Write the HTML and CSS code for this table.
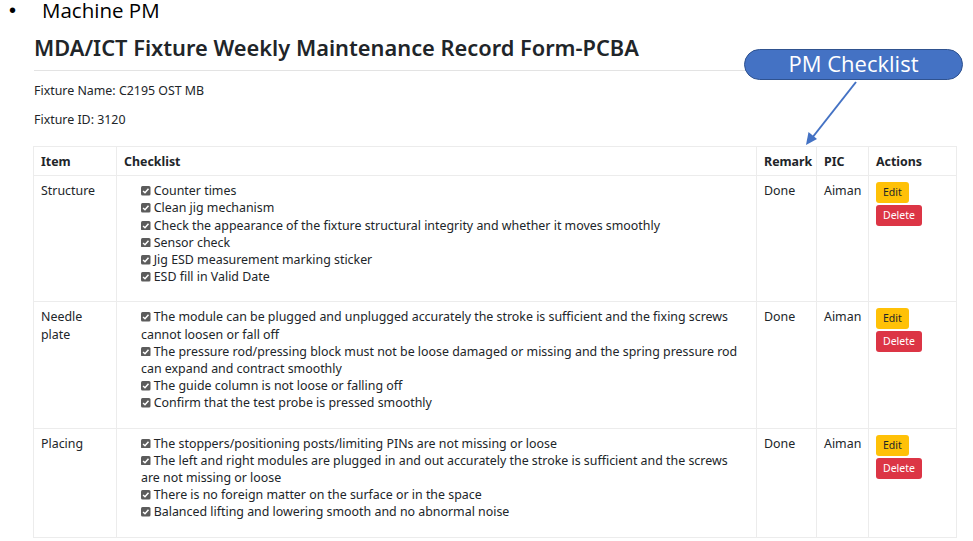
FILE: index.html
```html
<!DOCTYPE html>
<html lang="en">
<head>
<meta charset="utf-8">
<title>Machine PM</title>
<link rel="stylesheet" href="styles.css">
</head>
<body>
<div class="slide-bullet"><span class="dot">•</span><span class="bullet-text">Machine PM</span></div>
<main class="page">
  <h2 class="title">MDA/ICT Fixture Weekly Maintenance Record Form-PCBA</h2>
  <hr class="rule">
  <p class="info">Fixture Name: C2195 OST MB</p>
  <p class="info info-second">Fixture ID: 3120</p>
  <table class="records">
    <thead>
      <tr>
        <th class="c-item">Item</th>
        <th class="c-check">Checklist</th>
        <th class="c-remark">Remark</th>
        <th class="c-pic">PIC</th>
        <th class="c-act">Actions</th>
      </tr>
    </thead>
    <tbody>
      <tr>
        <td>Structure</td>
        <td>
          <ul class="checks">
            <li><svg class="cb" viewBox="0 0 10 10"><rect width="10" height="10" rx="1.6"/><path d="M2.2 5.2 4.2 7.1 7.9 2.9"/></svg> Counter times</li>
            <li><svg class="cb" viewBox="0 0 10 10"><rect width="10" height="10" rx="1.6"/><path d="M2.2 5.2 4.2 7.1 7.9 2.9"/></svg> Clean jig mechanism</li>
            <li><svg class="cb" viewBox="0 0 10 10"><rect width="10" height="10" rx="1.6"/><path d="M2.2 5.2 4.2 7.1 7.9 2.9"/></svg> Check the appearance of the fixture structural integrity and whether it moves smoothly</li>
            <li><svg class="cb" viewBox="0 0 10 10"><rect width="10" height="10" rx="1.6"/><path d="M2.2 5.2 4.2 7.1 7.9 2.9"/></svg> Sensor check</li>
            <li><svg class="cb" viewBox="0 0 10 10"><rect width="10" height="10" rx="1.6"/><path d="M2.2 5.2 4.2 7.1 7.9 2.9"/></svg> Jig ESD measurement marking sticker</li>
            <li><svg class="cb" viewBox="0 0 10 10"><rect width="10" height="10" rx="1.6"/><path d="M2.2 5.2 4.2 7.1 7.9 2.9"/></svg> ESD fill in Valid Date</li>
          </ul>
        </td>
        <td>Done</td>
        <td>Aiman</td>
        <td><button class="btn btn-edit">Edit</button><button class="btn btn-del">Delete</button></td>
      </tr>
      <tr>
        <td>Needle plate</td>
        <td>
          <ul class="checks">
            <li><svg class="cb" viewBox="0 0 10 10"><rect width="10" height="10" rx="1.6"/><path d="M2.2 5.2 4.2 7.1 7.9 2.9"/></svg> The module can be plugged and unplugged accurately the stroke is sufficient and the fixing screws cannot loosen or fall off</li>
            <li><svg class="cb" viewBox="0 0 10 10"><rect width="10" height="10" rx="1.6"/><path d="M2.2 5.2 4.2 7.1 7.9 2.9"/></svg> The pressure rod/pressing block must not be loose damaged or missing and the spring pressure rod can expand and contract smoothly</li>
            <li><svg class="cb" viewBox="0 0 10 10"><rect width="10" height="10" rx="1.6"/><path d="M2.2 5.2 4.2 7.1 7.9 2.9"/></svg> The guide column is not loose or falling off</li>
            <li><svg class="cb" viewBox="0 0 10 10"><rect width="10" height="10" rx="1.6"/><path d="M2.2 5.2 4.2 7.1 7.9 2.9"/></svg> Confirm that the test probe is pressed smoothly</li>
          </ul>
        </td>
        <td>Done</td>
        <td>Aiman</td>
        <td><button class="btn btn-edit">Edit</button><button class="btn btn-del">Delete</button></td>
      </tr>
      <tr>
        <td>Placing</td>
        <td>
          <ul class="checks">
            <li><svg class="cb" viewBox="0 0 10 10"><rect width="10" height="10" rx="1.6"/><path d="M2.2 5.2 4.2 7.1 7.9 2.9"/></svg> The stoppers/positioning posts/limiting PINs are not missing or loose</li>
            <li><svg class="cb" viewBox="0 0 10 10"><rect width="10" height="10" rx="1.6"/><path d="M2.2 5.2 4.2 7.1 7.9 2.9"/></svg> The left and right modules are plugged in and out accurately the stroke is sufficient and the screws are not missing or loose</li>
            <li><svg class="cb" viewBox="0 0 10 10"><rect width="10" height="10" rx="1.6"/><path d="M2.2 5.2 4.2 7.1 7.9 2.9"/></svg> There is no foreign matter on the surface or in the space</li>
            <li><svg class="cb" viewBox="0 0 10 10"><rect width="10" height="10" rx="1.6"/><path d="M2.2 5.2 4.2 7.1 7.9 2.9"/></svg> Balanced lifting and lowering smooth and no abnormal noise</li>
          </ul>
        </td>
        <td>Done</td>
        <td>Aiman</td>
        <td><button class="btn btn-edit">Edit</button><button class="btn btn-del">Delete</button></td>
      </tr>
    </tbody>
  </table>
</main>
<div class="callout">PM Checklist</div>
<svg class="arrow" width="60" height="70" viewBox="0 0 60 70">
  <line x1="54" y1="2" x2="10" y2="58" stroke="#4472c4" stroke-width="2"/>
  <path d="M4 65 L6.5 52 L15 59 Z" fill="#4472c4"/>
</svg>
</body>
</html>
```
FILE: styles.css
```css
* { box-sizing: border-box; }
body {
  margin: 0;
  background: #fff;
  color: #212529;
  font-family: "Noto Sans", "Open Sans", sans-serif;
  position: relative;
  width: 973px;
  height: 541px;
  overflow: hidden;
}
.slide-bullet {
  display: flex;
  align-items: center;
  height: 20px;
  font-family: "Open Sans", sans-serif;
  font-size: 20.5px;
  line-height: 20px;
  color: #000;
}
.dot {
  width: 42px;
  padding-left: 9px;
  font-family: "Liberation Sans", sans-serif;
  font-size: 20px;
}
.page {
  margin-left: 34px;
  width: 923px;
}
.title {
  margin: 14px 0 0;
  font-size: 21.8px;
  font-weight: 600;
  line-height: 28px;
  color: #212529;
}
.rule {
  margin: 8px 0 0;
  border: 0;
  border-top: 1.5px solid #e3e3e3;
}
.info {
  margin: 0;
  font-size: 12.4px;
  line-height: 17px;
  padding-top: 11px;
}
.info-second { padding-top: 12px; }
.records {
  margin-top: 18px;
  width: 923px;
  margin-left: -1px;
  border-collapse: collapse;
  table-layout: fixed;
  font-size: 12.4px;
  line-height: 17.2px;
}
.records th, .records td {
  border: 1px solid #ececec;
  padding: 6px 7px;
  vertical-align: top;
  text-align: left;
}
.records th { font-weight: 700; padding-top: 6px; padding-bottom: 5px; }
.c-item { width: 83px; }
.c-check { width: 640px; }
.c-remark { width: 60px; }
.c-pic { width: 52px; }
.c-act { width: 88px; }
.checks {
  list-style: none;
  margin: 0 0 10px;
  padding-left: 17px;
}
.cb {
  width: 9.5px;
  height: 9.5px;
  vertical-align: -0.5px;
}
.cb rect { fill: #5c5c5c; }
.cb path { fill: none; stroke: #fff; stroke-width: 1.6; }
.btn {
  display: block;
  border: 0;
  border-radius: 3px;
  font-family: "Noto Sans", sans-serif;
  font-size: 10.5px;
  line-height: 15px;
  padding: 3px 7px;
  height: 21px;
  margin-bottom: 2px;
}
.btn-edit { background: #ffc107; color: #212529; }
.btn-del { background: #dc3545; color: #fff; }
.callout {
  position: absolute;
  left: 744px;
  top: 49px;
  width: 219px;
  height: 31px;
  border-radius: 16px;
  background: #4472c4;
  border: 1px solid #2f528f;
  color: #fff;
  font-family: "Open Sans", sans-serif;
  font-size: 22px;
  line-height: 27px;
  text-align: center;
}
.arrow {
  position: absolute;
  left: 802px;
  top: 80px;
}
```
